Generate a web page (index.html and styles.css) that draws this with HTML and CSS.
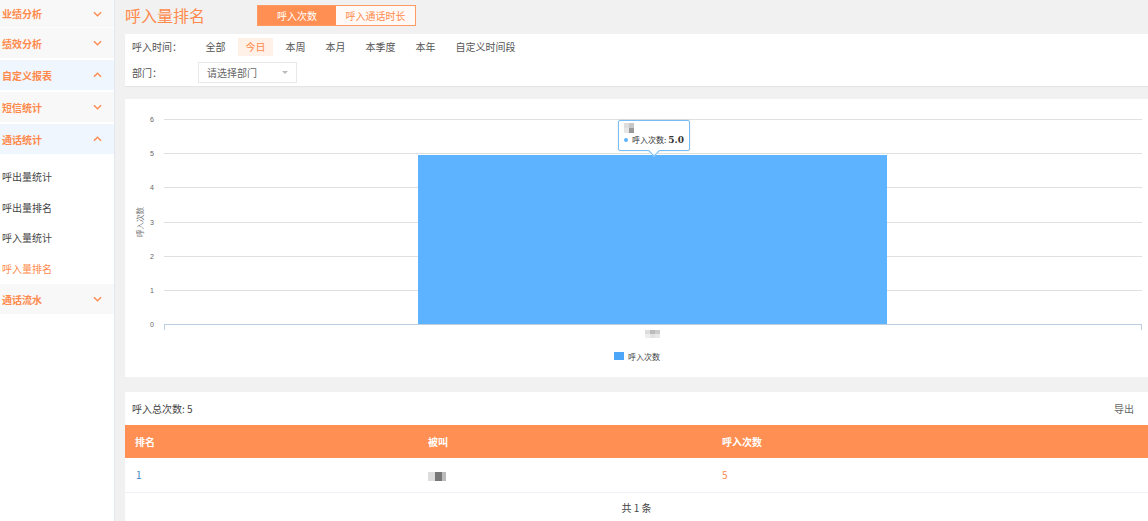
FILE: index.html
```html
<!DOCTYPE html>
<html lang="zh">
<head>
<meta charset="utf-8">
<title>呼入量排名</title>
<link rel="stylesheet" href="styles.css">
</head>
<body>
<div class="app">
  <aside class="sidebar">
    <div class="grp"><span>业绩分析</span><svg class="chev" viewBox="0 0 10 6"><polyline points="1,1 5,5 9,1"/></svg></div>
    <div class="grp"><span>绩效分析</span><svg class="chev" viewBox="0 0 10 6"><polyline points="1,1 5,5 9,1"/></svg></div>
    <div class="grp open"><span>自定义报表</span><svg class="chev" viewBox="0 0 10 6"><polyline points="1,5 5,1 9,5"/></svg></div>
    <div class="grp"><span>短信统计</span><svg class="chev" viewBox="0 0 10 6"><polyline points="1,1 5,5 9,1"/></svg></div>
    <div class="grp open"><span>通话统计</span><svg class="chev" viewBox="0 0 10 6"><polyline points="1,5 5,1 9,5"/></svg></div>
    <ul class="sub">
      <li>呼出量统计</li>
      <li>呼出量排名</li>
      <li>呼入量统计</li>
      <li class="active">呼入量排名</li>
    </ul>
    <div class="grp"><span>通话流水</span><svg class="chev" viewBox="0 0 10 6"><polyline points="1,1 5,5 9,1"/></svg></div>
  </aside>
  <main class="main">
    <div class="head">
      <h1 class="title">呼入量排名</h1>
      <div class="tabs">
        <span class="tab on">呼入次数</span>
        <span class="tab">呼入通话时长</span>
      </div>
    </div>
    <section class="panel filters">
      <div class="frow">
        <span class="flabel">呼入时间：</span>
        <div class="opts">
          <span class="opt">全部</span>
          <span class="opt sel">今日</span>
          <span class="opt">本周</span>
          <span class="opt">本月</span>
          <span class="opt">本季度</span>
          <span class="opt">本年</span>
          <span class="opt">自定义时间段</span>
        </div>
      </div>
      <div class="frow">
        <span class="flabel">部门：</span>
        <div class="select"><span>请选择部门</span><i class="caret"></i></div>
      </div>
    </section>
    <section class="panel chart">
      <svg class="plot" viewBox="0 0 1023 278" preserveAspectRatio="none">
        <g class="grid">
          <line x1="39" x2="1017" y1="20.5" y2="20.5"/>
          <line x1="39" x2="1017" y1="54.5" y2="54.5"/>
          <line x1="39" x2="1017" y1="88.5" y2="88.5"/>
          <line x1="39" x2="1017" y1="123.5" y2="123.5"/>
          <line x1="39" x2="1017" y1="157.5" y2="157.5"/>
          <line x1="39" x2="1017" y1="191.5" y2="191.5"/>
        </g>
        <g class="ylab">
          <text x="29" y="23">6</text>
          <text x="29" y="57">5</text>
          <text x="29" y="91">4</text>
          <text x="29" y="126">3</text>
          <text x="29" y="160">2</text>
          <text x="29" y="194">1</text>
          <text x="29" y="228">0</text>
        </g>
        <text class="ytitle" transform="translate(18,123) rotate(-90)">呼入次数</text>
        <rect class="bar" x="293" y="56" width="469" height="169.5"/>
        <line class="axis" x1="39" x2="1017" y1="225.5" y2="225.5"/>
        <line class="axis" x1="39.5" x2="39.5" y1="225" y2="231"/>
        <line class="axis" x1="1016.5" x2="1016.5" y1="225" y2="231"/>
        <g class="blur">
          <rect x="520" y="231" width="5" height="4" fill="#ddd"/>
          <rect x="525" y="231" width="5" height="4" fill="#bbb"/>
          <rect x="530" y="231" width="5" height="4" fill="#ccc"/>
          <rect x="520" y="235" width="5" height="4" fill="#eee"/>
          <rect x="525" y="235" width="5" height="4" fill="#e2e2e2"/>
          <rect x="530" y="235" width="5" height="4" fill="#e8e8e8"/>
        </g>
        <rect class="legbox" x="489" y="253" width="10" height="8"/>
        <text class="legtxt" x="503" y="261">呼入次数</text>
      </svg>
      <div class="tip">
        <div class="tipblur"><i class="b1"></i><i class="b2"></i><i class="b3"></i><i class="b4"></i></div>
        <div class="tiprow"><i class="dot"></i>呼入次数: <b>5.0</b></div>
      </div>
    </section>
    <section class="panel table-panel">
      <div class="tbar">
        <span>呼入总次数: 5</span>
        <span class="export">导出</span>
      </div>
      <table class="rank">
        <colgroup><col class="c1"><col class="c2"><col></colgroup>
        <thead>
          <tr><th>排名</th><th>被叫</th><th>呼入次数</th></tr>
        </thead>
        <tbody>
          <tr>
            <td class="num">1</td>
            <td><span class="mask"><i></i><i class="d"></i><i class="m"></i></span></td>
            <td class="cnt">5</td>
          </tr>
        </tbody>
      </table>
      <div class="pager">共 1 条</div>
    </section>
  </main>
</div>
</body>
</html>
```

FILE: styles.css
```css
* { box-sizing: border-box; margin: 0; padding: 0; }
html, body { height: 100%; }
body {
  font-family: "Noto Sans CJK SC", "Noto Sans", sans-serif;
  font-size: 10px;
  color: #555;
  background: #f1f1f1;
  overflow: hidden;
}
.app { display: flex; height: 521px; }

.sidebar {
  width: 115px;
  flex: none;
  background: #fff;
  border-right: 1px solid #e2e8ef;
}
.grp {
  height: 30px;
  margin-bottom: 2px;
  background: #f8f8f8;
  display: flex;
  align-items: center;
  justify-content: space-between;
  padding: 0 12px 0 2px;
  color: #ff8a4c;
  font-weight: bold;
  font-size: 10px;
}
.grp:first-child { height: 27px; margin-bottom: 1px; }
.grp.open { background: #eff6fd; }
.chev { width: 9px; height: 6px; }
.chev polyline { fill: none; stroke: #ff8d52; stroke-width: 1.6; }
.sub { list-style: none; padding: 6px 0 0; }
.sub li { height: 30.5px; line-height: 30px; padding-left: 2px; color: #444; }
.sub li.active { color: #ff8a4c; }

.main { flex: 1; padding-left: 10px; min-width: 0; }
.head { height: 34px; display: flex; align-items: center; }
.title { font-size: 16px; font-weight: normal; color: #ff8a4c; width: 132px; margin-top: -4px; }
.tabs {
  display: flex;
  border: 1px solid #ff9a63;
  height: 21px;
  margin-top: -4px;
}
.tab {
  display: flex; align-items: center; justify-content: center;
  color: #ff8a4c;
  background: #fffaf7;
  width: 79px;
  white-space: nowrap;
}
.tab.on { background: #ff8f52; color: #fff; width: 78px; }

.panel { background: #fff; }
.filters {
  height: 52px;
  padding: 2px 0 0 7px;
  box-shadow: 0 1px 1px #e6e6e6;
}
.frow { display: flex; align-items: center; height: 21px; }
.frow + .frow { margin-top: 5px; }
.flabel { width: 66px; color: #555; }
.opts { display: flex; }
.opt { padding: 0 7.5px; height: 18px; line-height: 18px; margin-right: 5px; color: #555; white-space: nowrap; }
.opt.sel { background: #fff0e8; color: #ff8a4c; }
.select {
  width: 99px; height: 21px;
  border: 1px solid #e8e8e8;
  display: flex; align-items: center; justify-content: space-between;
  padding: 0 8px;
  color: #666;
}
.caret {
  width: 0; height: 0;
  border-left: 3px solid transparent;
  border-right: 3px solid transparent;
  border-top: 3px solid #bbb;
}

.chart { margin-top: 13px; height: 278px; position: relative; }
.plot { display: block; width: 100%; height: 278px; }
.grid line { stroke: #e0e0e0; stroke-width: 1; }
.axis { stroke: #bccfe2; stroke-width: 1; }
.ylab text { font-size: 7px; fill: #666; text-anchor: end; font-family: "Liberation Sans", sans-serif; }
.ytitle { font-size: 7.5px; fill: #777; text-anchor: middle; }
.bar { fill: #5db3ff; }
.legbox { fill: #4ea6f8; }
.legtxt { font-size: 8px; fill: #444; }
.tip {
  position: absolute;
  left: 493px; top: 21px;
  width: 72px; height: 31px;
  background: #fff;
  border: 1px solid #77bdf7;
  border-radius: 2px;
  box-shadow: 0 0 2px rgba(0,0,0,0.12);
  padding: 2px 5px;
}
.tip::after {
  content: ""; position: absolute;
  left: 31px; bottom: -5px;
  width: 7px; height: 7px;
  background: #fff;
  border-right: 1px solid #77bdf7;
  border-bottom: 1px solid #77bdf7;
  transform: rotate(45deg);
}
.tipblur { display: grid; grid-template-columns: 5px 5px; grid-auto-rows: 5px; width: 10px; }
.tipblur i { display: block; }
.tipblur .b1 { background: #ddd; }
.tipblur .b2 { background: #c6c6c6; }
.tipblur .b3 { background: #e6e6e6; }
.tipblur .b4 { background: #999; }
.tiprow { display: flex; align-items: center; font-size: 8px; color: #333; margin-top: 1px; white-space: nowrap; }
.tiprow b { font-family: "DejaVu Serif", serif; font-size: 9px; margin-left: 2px; font-weight: bold; }
.dot { width: 4px; height: 4px; border-radius: 50%; background: #5db3ff; margin-right: 4px; }

.table-panel { margin-top: 15px; height: 140px; }
.tbar {
  height: 33px;
  display: flex; align-items: center; justify-content: space-between;
  padding: 0 14px 0 7px;
  color: #444;
}
.export { color: #666; }
.rank { width: 100%; border-collapse: collapse; table-layout: fixed; }
.rank .c1 { width: 293px; }
.rank .c2 { width: 294px; }
.rank th {
  background: #ff8f52;
  color: #fff;
  font-weight: bold;
  text-align: left;
  height: 33px;
  padding-left: 10px;
}
.rank td {
  height: 34px;
  padding-left: 10px;
  border-bottom: 1px solid #eef1f6;
  color: #555;
}
.rank td.num { color: #3d7fc2; padding-left: 11px; }
.rank td.cnt { color: #ff8a4c; }
.mask { display: inline-flex; vertical-align: middle; }
.mask i { display: block; width: 7px; height: 9px; background: #ddd; }
.mask i.d { background: #777; }
.mask i.m { background: #bbb; width: 4px; }
.pager { text-align: center; padding-top: 7px; color: #444; }
```
